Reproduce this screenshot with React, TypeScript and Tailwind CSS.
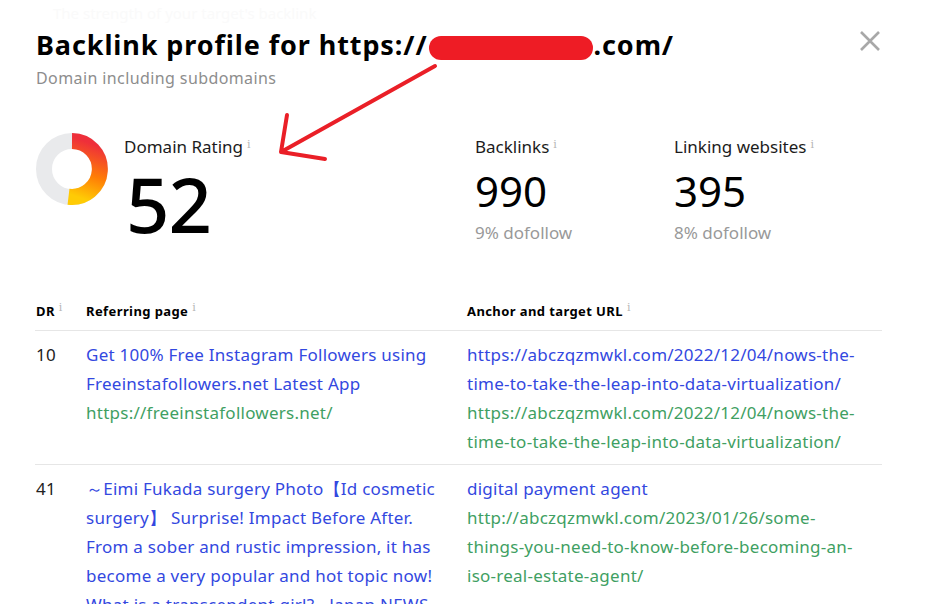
import React from 'react';

const font = { fontFamily: '"Noto Sans", "Open Sans", sans-serif' };

const Info = () => (
  <sup className="ml-1 text-[11px] text-[#b5b5b5] font-normal" style={{ fontFamily: '"DejaVu Serif", serif' }}>
    i
  </sup>
);

// 52 out of 100 -> arc from 12 o'clock clockwise, ~187deg
const Donut = () => (
  <svg width="74" height="74" viewBox="0 0 74 74">
    <defs>
      <linearGradient id="dr" x1="0.5" y1="0" x2="0.3" y2="1">
        <stop offset="0%" stopColor="#ee2f3a" />
        <stop offset="55%" stopColor="#ff7d06" />
        <stop offset="100%" stopColor="#ffcb05" />
      </linearGradient>
    </defs>
    <circle cx="37" cy="37" r="28" fill="none" stroke="#e9eaec" strokeWidth="16" />
    <path d="M37 9 A28 28 0 1 1 33.5 64.8" fill="none" stroke="url(#dr)" strokeWidth="16" />
  </svg>
);

const rows = [
  {
    dr: '10',
    title: 'Get 100% Free Instagram Followers using Freeinstafollowers.net Latest App',
    page: 'https://freeinstafollowers.net/',
    anchor: 'https://abczqzmwkl.com/2022/12/04/nows-the-time-to-take-the-leap-into-data-virtualization/',
    target: 'https://abczqzmwkl.com/2022/12/04/nows-the-time-to-take-the-leap-into-data-virtualization/',
  },
  {
    dr: '41',
    title:
      ' ～Eimi Fukada surgery Photo【Id cosmetic surgery】 Surprise! Impact Before After. From a sober and rustic impression, it has become a very popular and hot topic now! What is a transcendent girl? - Japan NEWS',
    page: '',
    anchor: 'digital payment agent',
    target: 'http://abczqzmwkl.com/2023/01/26/some-things-you-need-to-know-before-becoming-an-iso-real-estate-agent/',
  },
];

export default function App() {
  return (
    <div className="relative flex h-[604px] w-[935px] overflow-hidden bg-white text-[#1c1c1c]" style={font}>
      <div className="flex-1 pl-[36px] pr-[53px]">
        {/* faded text from the page behind */}
        <div className="h-[29px] pl-[17px] pt-[2px] text-[15px] text-[#fafafa]">The strength of your target's backlink</div>

        <div className="flex items-start justify-between">
          <h1 className="text-[27px] font-bold leading-[31px] tracking-[0.9px] text-black">
            Backlink profile for https://
            <span className="mx-[1px] inline-block h-[24px] w-[164px] rounded-[12px] bg-[#ee1c25] align-[-5px]"></span>
            .com/
          </h1>
          <button className="mr-[1px] mt-[1px] text-[#a8a8a8]">
            <svg width="22" height="22" viewBox="0 0 22 22">
              <path d="M2 2 L20 20 M20 2 L2 20" stroke="currentColor" strokeWidth="2.6" />
            </svg>
          </button>
        </div>
        <p className="mt-[7px] text-[16px] leading-[22px] tracking-[0.4px] text-[#8d8d8d]">Domain including subdomains</p>

        {/* stats */}
        <div className="mt-[44px] flex">
          <div className="flex w-[439px] gap-[15px]">
            <div className="-ml-[1px] -mt-[1px]">
              <Donut />
            </div>
            <div>
              <div className="text-[17px] leading-[27px]">
                Domain Rating
                <Info />
              </div>
              <div className="ml-[2px] mt-[9px] text-[76px] font-medium leading-[70px] tracking-[-1px] text-black">52</div>
            </div>
          </div>
          <div className="w-[199px]">
            <div className="text-[17px] leading-[27px]">
              Backlinks
              <Info />
            </div>
            <div className="mt-[8px] text-[42px] leading-[46px] text-black">990</div>
            <div className="mt-[7px] text-[17px] leading-[24px] text-[#999]">9% dofollow</div>
          </div>
          <div>
            <div className="text-[17px] leading-[27px]">
              Linking websites
              <Info />
            </div>
            <div className="mt-[8px] text-[42px] leading-[46px] text-black">395</div>
            <div className="mt-[7px] text-[17px] leading-[24px] text-[#999]">8% dofollow</div>
          </div>
        </div>

        {/* table */}
        <div className="-ml-[1px] mt-[56px] w-[847px]">
          <div className="flex border-b border-[#e6e6e6] pb-[9px] text-[13px] font-bold leading-[20px] tracking-[0.4px] text-black">
            <div className="w-[51px] pl-[1px]">
              DR
              <Info />
            </div>
            <div className="w-[381px]">
              Referring page
              <Info />
            </div>
            <div>
              Anchor and target URL
              <Info />
            </div>
          </div>
          {rows.map((r) => (
            <div
              key={r.dr}
              className="flex border-b border-[#e6e6e6] pb-[8px] pt-[9px] text-[17px] leading-[29px] tracking-[0.25px]"
            >
              <div className="w-[51px] pl-[1px] text-[#222]">{r.dr}</div>
              <div className="w-[381px] pr-[20px]">
                <div className="text-[#3348e0]">{r.title}</div>
                {r.page && <div className="text-[#3f9f63]">{r.page}</div>}
              </div>
              <div className="flex-1 pr-[20px]">
                <div className="break-words text-[#3348e0]">{r.anchor}</div>
                <div className="break-words text-[#3f9f63]">{r.target}</div>
              </div>
            </div>
          ))}
        </div>
      </div>

      {/* scrollbar */}
      <div className="flex w-[5px] flex-col bg-[#f0f0f0]">
        <div className="h-[37px] bg-[#c6c6c6]"></div>
      </div>

      {/* red arrow annotation */}
      <svg className="pointer-events-none absolute left-0 top-0" width="935" height="604">
        <path
          d="M435 66 L281 152 M281 152 L287 115 M281 152 L325 159"
          stroke="#ea1f27"
          strokeWidth="4"
          strokeLinecap="round"
          fill="none"
        />
      </svg>
    </div>
  );
}
